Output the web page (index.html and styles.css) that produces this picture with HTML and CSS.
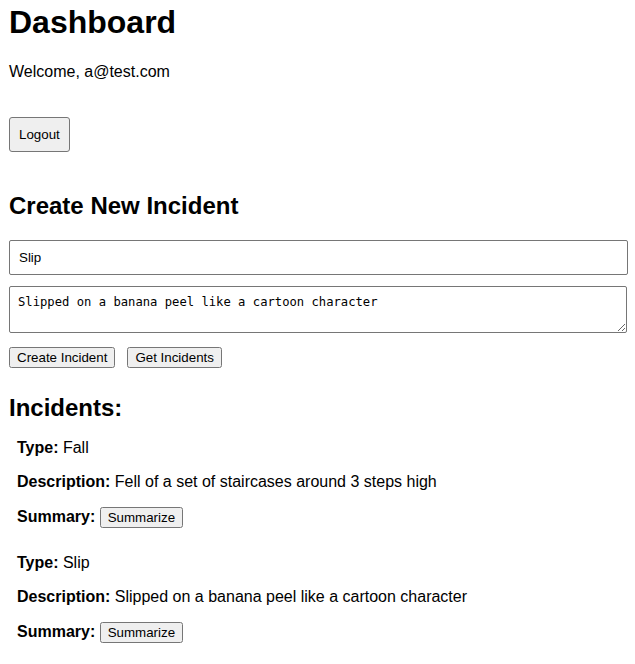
FILE: index.html
```html
<!DOCTYPE html>
<html lang="en">
<head>
<meta charset="utf-8">
<title>Dashboard</title>
<link rel="stylesheet" href="styles.css">
</head>
<body>
<h1 class="title">Dashboard</h1>
<p class="welcome">Welcome, a@test.com</p>
<div class="logout-row"><button class="logout-btn">Logout</button></div>

<h2 class="section-title create-title">Create New Incident</h2>
<form class="incident-form">
  <input class="field-input" type="text" value="Slip">
  <textarea class="field-textarea">Slipped on a banana peel like a cartoon character</textarea>
  <div class="form-actions">
    <button type="button" class="small-btn">Create Incident</button>
    <button type="button" class="small-btn">Get Incidents</button>
  </div>
</form>

<h2 class="section-title list-title">Incidents:</h2>
<div class="incident-list">
  <div class="incident">
    <p class="incident-line"><strong>Type:</strong> Fall</p>
    <p class="incident-line"><strong>Description:</strong> Fell of a set of staircases around 3 steps high</p>
    <p class="incident-line"><strong>Summary:</strong> <button class="small-btn">Summarize</button></p>
  </div>
  <div class="incident">
    <p class="incident-line"><strong>Type:</strong> Slip</p>
    <p class="incident-line"><strong>Description:</strong> Slipped on a banana peel like a cartoon character</p>
    <p class="incident-line"><strong>Summary:</strong> <button class="small-btn">Summarize</button></p>
  </div>
</div>
</body>
</html>
```

FILE: styles.css
```css
html, body {
  margin: 0;
  padding: 0;
}
body {
  padding: 0 7px 0 9px;
  font-family: "Liberation Sans", Arial, sans-serif;
  font-size: 16px;
  color: #000;
  background: #fff;
  display: flow-root;
}
.title {
  font-size: 32px;
  font-weight: bold;
  margin: 4px 0 0;
  line-height: normal;
}
.welcome {
  margin: 22px 0 0;
}
.logout-row {
  margin-top: 36px;
}
.logout-btn {
  font-family: "Liberation Sans", Arial, sans-serif;
  font-size: 13.33px;
  color: #000;
  background: #efefef;
  border: 1px solid #767676;
  border-radius: 3px;
  padding: 9px 9px;
  line-height: normal;
}
.section-title {
  font-size: 24px;
  font-weight: bold;
  margin: 0;
}
.create-title {
  margin-top: 40px;
}
.incident-form {
  margin: 20px 0 0;
  display: flex;
  flex-direction: column;
}
.field-input {
  box-sizing: border-box;
  width: 100%;
  height: 35px;
  margin: 0;
  padding: 0 9px;
  border: 1px solid #767676;
  border-radius: 2px;
  font-family: "Liberation Sans", Arial, sans-serif;
  font-size: 13.33px;
  color: #000;
}
.field-textarea {
  box-sizing: border-box;
  display: block;
  width: calc(100% - 1px);
  height: 47px;
  margin: 11px 0 0;
  padding: 8px 8px;
  border: 1px solid #767676;
  border-radius: 2px;
  font-family: "DejaVu Sans Mono", "Liberation Mono", monospace;
  font-size: 12.2px;
  color: #000;
  resize: vertical;
}
.form-actions {
  margin-top: 14px;
  display: flex;
  gap: 12px;
}
.small-btn {
  font-family: "Liberation Sans", Arial, sans-serif;
  font-size: 13.33px;
}
.list-title {
  margin-top: 26px;
}
.incident-list {
  margin-top: 17px;
}
.incident {
  padding: 0 8px;
}
.incident + .incident {
  margin-top: 26px;
}
.incident-line {
  margin: 0;
}
.incident-line + .incident-line {
  margin-top: 16px;
}
```
